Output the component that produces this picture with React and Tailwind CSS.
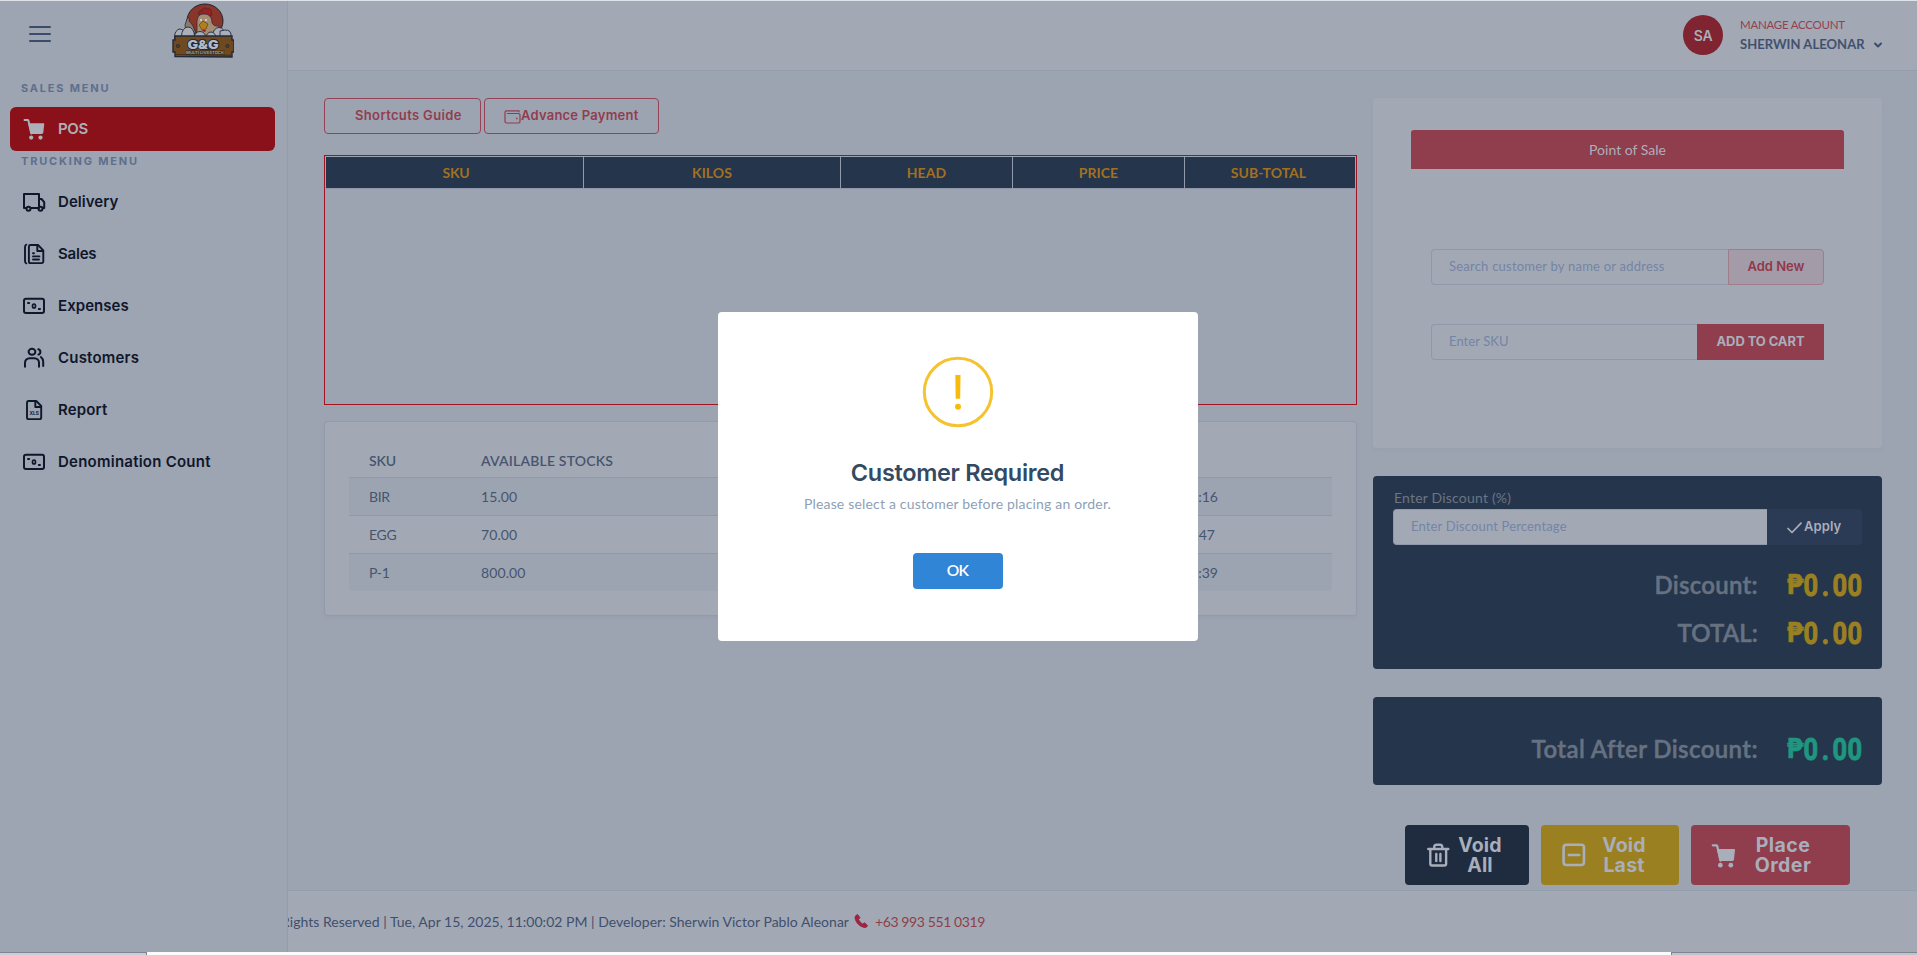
import React from "react";

const inter = "font-['Inter','Liberation_Sans',sans-serif]";
const lato = "font-['Lato','Liberation_Sans',sans-serif]";

function CartIcon({ className }) {
  return (
    <svg viewBox="0 0 24 24" className={className} fill="currentColor">
      <path d="M2.500 2.900h3.100c.4 0 .7.300.8.600l2.900 13" fill="none" stroke="currentColor" strokeWidth="2" strokeLinecap="round" strokeLinejoin="round" />
      <path d="M6.100 6.300h15.200c.6 0 1 .5.9 1.100l-.9 8.100c-.1.800-.7 1.400-1.500 1.400h-9.600c-.9 0-1.700-.6-1.900-1.400z" />
      <circle cx="9.200" cy="20.600" r="2.100" />
      <circle cx="18.500" cy="20.600" r="2.100" />
    </svg>
  );
}

function Line({ className, width = 2, children }) {
  return (
    <svg viewBox="0 0 24 24" className={className} fill="none" stroke="currentColor" strokeWidth={width} strokeLinecap="round" strokeLinejoin="round">
      {children}
    </svg>
  );
}

const TruckIcon = () => (
  <Line className="size-6 shrink-0">
    <path d="M4 18H2V4h15v14H9M17 9h2.500l2.700 3.200V18H21M13.500 18H17" />
    <circle cx="6.500" cy="18.700" r="2" />
    <circle cx="18.500" cy="18.700" r="2" />
  </Line>
);

const SalesIcon = () => (
  <Line className="size-6 shrink-0" width={1.9}>
    <path d="M4.300 2.600Q3 3 3 5v14q0 2 1.300 2.400" />
    <path d="M8.500 3H16l5.300 5.300v11.200a1.600 1.600 0 0 1-1.600 1.600H8.500a1.600 1.600 0 0 1-1.600-1.600v-15A1.600 1.600 0 0 1 8.500 3z" />
    <path d="M15.300 3.200V9h5.800M11 14.400h6.400M11 17.500h6M11 11.200h1" />
  </Line>
);

const CashIcon = () => (
  <Line className="size-6 shrink-0">
    <rect x="2" y="4.800" width="20" height="14.200" rx="2" />
    <ellipse cx="12" cy="12" rx="1.500" ry="2" strokeWidth="1.700" />
    <path d="M6 9h1.200M16.800 15H18" strokeWidth="1.900" />
  </Line>
);

const UsersIcon = () => (
  <Line className="size-6 shrink-0">
    <ellipse cx="10" cy="5.800" rx="3.400" ry="3" />
    <path d="M3 20.800v-4A4.600 4.600 0 0 1 7.600 12.200h4.800a4.600 4.600 0 0 1 4.600 4.600v4M16.300 3.200c2.800.8 2.800 4.600 0 5.400M18.900 11c1.500 1.200 2.300 2.800 2.300 4.800v4.200" />
  </Line>
);

const ReportIcon = () => (
  <Line className="size-6 shrink-0" width={1.9}>
    <path d="M6.600 3h7.700L19.200 8v11.500a1.600 1.600 0 0 1-1.600 1.600h-11A1.600 1.600 0 0 1 5 19.500v-15A1.600 1.600 0 0 1 6.600 3z" />
    <path d="M13.300 3.200V9h5.700" />
    <text x="12.100" y="16.700" textAnchor="middle" stroke="none" fill="currentColor" fontSize="4.800" fontWeight="700" fontFamily="Inter">XLS</text>
  </Line>
);

function Logo() {
  return (
    <svg viewBox="0 0 62 56" className="h-[56px] w-[62px]">
      <ellipse cx="33" cy="18" rx="18" ry="17" fill="#8a3529" stroke="#1f2430" strokeWidth="1" />
      <path d="M27 12c-1-3 1-5 3-4 0-3 3-4 5-2 3-1 5 1 4 4 1 1 1 2 0 3z" fill="#9d1f26" stroke="#1f2430" strokeWidth=".5" />
      <path d="M25 34V20c0-6 2-9 7-9s8 3 8 9c2 3 3 3 6 3l3 2-3 9z" fill="#a58d73" stroke="#242a35" strokeWidth=".7" />
      <path d="M14 30l-1-8 2-6c2-2 3-1 2 2l2 2 2 3 3 7z" fill="#8c7a68" stroke="#242a35" strokeWidth=".8" />
      <path d="M27 22l4-4 5 3-2 5-4 1z" fill="#b07f1d" stroke="#3b2c16" strokeWidth=".5" />
      <path d="M30 27q3 4 4 0z" fill="#9d1f26" />
      <circle cx="29" cy="17" r="1" fill="#dcdfe5" />
      <circle cx="34" cy="17" r="1" fill="#dcdfe5" />
      <g fill="#a8aeba" stroke="#222a38" strokeWidth=".9">
        <ellipse cx="8" cy="34" rx="5.500" ry="8" />
        <ellipse cx="16" cy="33" rx="6.500" ry="9" />
        <ellipse cx="47" cy="33" rx="6.500" ry="8.500" />
        <path d="M48 28q10-3 11 3v8H48z" />
        <ellipse cx="28" cy="35" rx="6" ry="6.500" />
        <ellipse cx="39" cy="35" rx="5" ry="6" />
      </g>
      <path d="M3 33h57v4h2v12h-2v5L3 53.500V49H1V37h2z" fill="#6f4a20" stroke="#222a38" strokeWidth="1.400" />
      <path d="M3 51.500l57 .8" stroke="#4d3315" strokeWidth="1.200" />
      <circle cx="6" cy="43" r="1.600" fill="#59401f" stroke="#222a38" strokeWidth=".8" />
      <circle cx="55.500" cy="43" r="1.600" fill="#59401f" stroke="#222a38" strokeWidth=".8" />
      <text x="31" y="46" textAnchor="middle" textLength="31" lengthAdjust="spacingAndGlyphs" fontFamily="Inter" fontWeight="900" fontSize="12" fill="#b4bac5" stroke="#222a38" strokeWidth="1.800" paintOrder="stroke">G&amp;G</text>
      <text x="33" y="50.800" textAnchor="middle" textLength="38" lengthAdjust="spacingAndGlyphs" fontFamily="Inter" fontWeight="700" fontSize="3.200" fill="#a0a3a8" stroke="#2a2620" strokeWidth=".8" paintOrder="stroke">MULTI LIVESTOCK</text>
    </svg>
  );
}

const menu = [
  ["Delivery", TruckIcon, "tracking-[0.05px]"],
  ["Sales", SalesIcon, "tracking-[-0.2px]"],
  ["Expenses", CashIcon, "tracking-[0.05px]"],
  ["Customers", UsersIcon, "tracking-[0.2px]"],
  ["Report", ReportIcon, "tracking-[0.15px]"],
  ["Denomination Count", CashIcon, "tracking-[0.24px]"],
];

function Sidebar() {
  return (
    <aside className="w-[288px] shrink-0 border-r border-[#929daf] bg-[#9da4b2] pl-[10px]">
      <div className="flex h-[70px] items-start">
        <div className="mt-[25px] ml-[19px] flex w-[22px] flex-col gap-[5px]">
          <i className="h-[2px] rounded bg-[#3b4c6b]" />
          <i className="h-[2px] rounded bg-[#3b4c6b]" />
          <i className="h-[2px] rounded bg-[#3b4c6b]" />
        </div>
        <div className="mt-[2px] ml-[121px]"><Logo /></div>
      </div>
      <div className={`${inter} mt-[8px] h-[28px] pl-[11px] text-[11px] leading-[19px] font-bold tracking-[1.800px] text-[#5f6f8c]`}>SALES MENU</div>
      <div className="flex h-[44px] w-[265px] items-center rounded-md bg-[#8a101a] pl-[12px] text-[#abb0bb]">
        <CartIcon className="size-6" />
        <span className={`${inter} ml-[12px] text-[15px] font-semibold tracking-[-0.4px]`}>POS</span>
      </div>
      <div className={`${inter} h-[29px] pt-px pl-[11px] text-[11px] leading-[19px] font-bold tracking-[1.800px] text-[#5f6f8c]`}>TRUCKING MENU</div>
      <nav className="flex flex-col gap-2 text-[#0f172b]">
        {menu.map(([label, Icon, track]) => (
          <div key={label} className="flex h-[44px] items-center pl-[12px]">
            <Icon />
            <span className={`${inter} ml-[12px] text-[15px] font-semibold ${track}`}>{label}</span>
          </div>
        ))}
      </nav>
    </aside>
  );
}

function Header() {
  return (
    <header className="flex h-[70px] shrink-0 justify-end border-b border-[#949dad] bg-[#a3a9b4] pr-[34px]">
      <div className={`${inter} mt-[14px] flex size-10 items-center justify-center rounded-full bg-[#7f2430] text-[14px] font-semibold tracking-[-0.2px] text-[#a9aeba]`}>SA</div>
      <div className={`${lato} ml-[17px] w-[124px] pt-[16px] whitespace-nowrap`}>
        <div className="text-[11.5px] leading-4 tracking-[-0.25px] text-[#943f52]">MANAGE ACCOUNT</div>
        <div className="mt-[3px] text-[13px] leading-4 font-semibold tracking-[0.08px] text-[#3f4f6e] [-webkit-text-stroke:0.200px]">SHERWIN ALEONAR</div>
      </div>
      <svg viewBox="0 0 10 7" className="mt-[41px] ml-[9px] h-[7px] w-[10px]" fill="none" stroke="#3b4c6b" strokeWidth="2" strokeLinecap="round" strokeLinejoin="round"><path d="M2 1.500l3 3 3-3" /></svg>
    </header>
  );
}

const columns = [["SKU", "tracking-[-0.2px] pl-[3px]"], ["KILOS", "tracking-[0.07px]"], ["HEAD", "tracking-[0.07px]"], ["PRICE", "tracking-[0.07px]"], ["SUB-TOTAL", "tracking-[0.02px] pr-[3px]"]];
const stocks = [["BIR", "15.00", "15:16"], ["EGG", "70.00", "09:47"], ["P-1", "800.00", "10:39"]];

function LeftColumn() {
  return (
    <section className="flex w-[1033px] flex-col">
      <div className={`${inter} flex h-[36px] gap-[3px] text-[13px] font-semibold text-[#913d50]`}>
        <div className="flex w-[157px] items-center rounded-[4px] border border-[#964357] pl-[30px] tracking-[0.350px]">Shortcuts Guide</div>
        <div className="flex w-[175px] items-center rounded-[4px] border border-[#964357] pl-[19px] whitespace-nowrap">
          <svg viewBox="0 0 17 14" className="mt-px h-[14px] w-[17px] shrink-0" fill="none" stroke="currentColor" strokeWidth="1.200"><path d="M1 2.200v9.300q0 1.500 1.500 1.500h12q1.500 0 1.500-1.500V5q0-1.500-1.500-1.500H3M1 2.200Q1 .8 2.500.8H15v1.500" /><path d="M12 8.500h1.500" strokeWidth="1.500" /></svg>
          <span className="tracking-[0.230px]">Advance Payment</span>
        </div>
      </div>
      <div className="mt-[21px] h-[250px] border border-[#a01521] p-px">
        <div className={`${lato} grid h-[32px] grid-cols-[257px_256px_171px_171px_170px] gap-px border-b border-[#8d97a9] bg-[#929bad] text-[14px] font-bold text-[#a3701f]`}>
          {columns.map(([c, track]) => (
            <div key={c} className={`flex items-center justify-center bg-[#25354b] pb-px ${track}`}>{c}</div>
          ))}
        </div>
      </div>
      <div className={`${lato} mt-[16px] h-[195px] rounded-[4px] border border-[#919bac] bg-[#a3a9b4] px-[24px] pt-[22px] text-[14px] text-[#46556f] shadow-[0_2px_4px_rgba(60,75,100,0.06)]`}>
        <div className="grid h-[34px] grid-cols-[112px_715px_156px] items-center border-b border-[#8f99ab] font-semibold">
          <span className="pl-[20px] tracking-[-0.2px]">SKU</span>
          <span className="pl-[20px] tracking-[0.180px]">AVAILABLE STOCKS</span>
        </div>
        {stocks.map(([sku, qty, time], i) => (
          <div key={sku} className={`grid grid-cols-[112px_715px_156px] items-center pb-px ${i < 2 ? "h-[38px] border-b border-[#8f99ab]" : "h-[37px] rounded-b-[4px]"} ${i === 1 ? "" : "bg-[#9da4b1]"}`}>
            <span className="pl-[20px] tracking-[-0.300px]">{sku}</span>
            <span className="pl-[20px] tracking-[0.100px]">{qty}</span>
            <span className={i === 1 ? "pl-[3px]" : "pl-[6px]"}>{time}</span>
          </div>
        ))}
      </div>
    </section>
  );
}

function Lcd({ className }) {
  return (
    <div className={`flex h-[24px] w-[76px] items-center leading-none font-bold ${className}`}>
      <span className="inline-flex w-[18px] shrink-0 justify-center font-['DejaVu_Sans',sans-serif] text-[26px]"><span className="scale-x-[0.950] [-webkit-text-stroke:0.400px]">₱</span></span>
      {["0", ".", "0", "0"].map((d, i) => (
        <span key={i} className="inline-flex w-[14.500px] shrink-0 justify-center font-['Liberation_Mono',monospace] text-[31px]">
          <span className="font-['Roboto','Liberation_Sans',sans-serif] scale-x-[0.820] [-webkit-text-stroke:1px]">{d}</span>
        </span>
      ))}
    </div>
  );
}

function RightColumn() {
  return (
    <section className="flex w-[509px] flex-col">
      <div className={`${lato} h-[350px] rounded-[4px] bg-[#a3a9b4] pt-[32px] shadow-[0_2px_4px_rgba(60,75,100,0.05)]`}>
        <div className="ml-[38px] flex h-[39px] w-[433px] items-center justify-center rounded-t-[3px] bg-[#903d4e] pb-px text-[14px] text-[#abb0bb]">Point of Sale</div>
        <div className="mt-[80px] ml-[58px] flex h-[36px] w-[393px]">
          <div className="flex flex-1 items-center rounded-l-[4px] border border-r-0 border-[#8f99ab] pl-[17px] text-[13px] tracking-[0.220px] text-[#7384a6]">Search customer by name or address</div>
          <div className={`${inter} flex w-[96px] items-center justify-center rounded-r-[4px] border border-[#a07c8b] bg-[#a39ca8] text-[13px] font-semibold text-[#90384c]`}>Add New</div>
        </div>
        <div className="mt-[39px] ml-[58px] flex h-[36px] w-[393px]">
          <div className="flex flex-1 items-center rounded-l-[4px] border border-r-0 border-[#8f99ab] pl-[17px] text-[13px] tracking-[0.060px] text-[#7384a6]">Enter SKU</div>
          <div className={`${inter} flex w-[127px] items-center justify-center bg-[#903d4e] text-[13px] font-bold tracking-[-0.100px] text-[#a9aebb]`}>ADD TO CART</div>
        </div>
      </div>

      <div className={`${lato} mt-[28px] h-[193px] rounded-[4px] bg-[#25354b] px-[20px] pt-[12px]`}>
        <div className="h-[21px] pl-px text-[14px] leading-[20px] tracking-[0.200px] text-[#6a7585]">Enter Discount (%)</div>
        <div className="flex h-[36px]">
          <div className="flex w-[374px] items-center rounded-l-[4px] border border-r-0 border-[#8f99ab] bg-[#a3a9b4] pl-[17px] text-[13px] tracking-[0.160px] text-[#7384a6]">Enter Discount Percentage</div>
          <div className={`${inter} flex flex-1 items-center rounded-r-[4px] bg-[#2b3b56] pl-[20px] text-[13px] font-semibold text-[#a9aebb]`}>
            <svg viewBox="0 0 15 12" className="mt-[2px] h-[12px] w-[15px]" fill="none" stroke="currentColor" strokeWidth="1.700" strokeLinecap="round" strokeLinejoin="round"><path d="M1 6.500L5 10.500L14 1.200" /></svg>
            <span className="ml-[2px] tracking-[0.100px]">Apply</span>
          </div>
        </div>
        <div className="mt-[16px] flex h-[48px] items-center justify-end text-[24px] font-semibold text-[#667181]">
          <span className="tracking-[0.280px] [-webkit-text-stroke:0.500px]">Discount:</span>
          <Lcd className="ml-[28px] text-[#9b8022]" />
        </div>
        <div className="flex h-[48px] items-center justify-end text-[24px] font-semibold text-[#667181]">
          <span className="tracking-[0.120px] [-webkit-text-stroke:0.500px]">TOTAL:</span>
          <Lcd className="ml-[28px] text-[#9b8022]" />
        </div>
      </div>

      <div className={`${lato} mt-[28px] flex h-[88px] items-center justify-end rounded-[4px] bg-[#25354b] px-[20px] pt-[16px] text-[24px] font-semibold text-[#667181]`}>
        <span className="tracking-[0.400px] [-webkit-text-stroke:0.500px]">Total After Discount:</span>
        <Lcd className="ml-[28px] text-[#1f967f]" />
      </div>

      <div className={`${inter} mt-[40px] ml-[32px] flex h-[60px] gap-[12px] text-center text-[19.500px] leading-[20px] font-bold text-[#a9aebb]`}>
        <div className="flex w-[124px] items-center rounded-[4px] bg-[#1f2c40] pl-[20px]">
          <Line className="size-[26px] shrink-0" width={2.2}>
            <path d="M3 6.500h18.500M8.500 6.200V4.800A2.300 2.300 0 0 1 10.800 2.500h3A2.300 2.300 0 0 1 16 4.800v1.400M4.900 6.800V20a1.700 1.700 0 0 0 1.700 1.700h11.200a1.700 1.700 0 0 0 1.700-1.700V6.800M10.400 11v6.500M14.200 11v6.500" />
          </Line>
          <span className="ml-[6px] w-[46px] tracking-[0.200px]">Void All</span>
        </div>
        <div className="flex w-[138px] items-center rounded-[4px] bg-[#9b8022] pl-[20px]">
          <Line className="size-[26px] shrink-0" width={2.4}>
            <rect x="2.400" y="2.600" width="18.800" height="18.600" rx="2.500" />
            <path d="M7.300 12h9.500" />
          </Line>
          <span className="ml-[14px] w-[46px] tracking-[0.200px]">Void Last</span>
        </div>
        <div className="flex w-[159px] items-center rounded-[4px] bg-[#903d4e] pl-[19px]">
          <CartIcon className="size-[27px] shrink-0" />
          <span className="ml-[15px] w-[62px] tracking-[0.450px]">Place Order</span>
        </div>
      </div>
    </section>
  );
}

function Footer() {
  return (
    <footer className={`${lato} flex h-[62px] shrink-0 items-center border-t border-[#929dad] bg-[#a3a9b4] pb-px text-[14px] text-[#3f4f6e]`}>
      <div className="flex w-[561px] justify-end overflow-hidden whitespace-nowrap">
        <span className="tracking-[0.020px]">Rights Reserved | Tue, Apr 15, 2025, 11:00:02 PM | Developer: Sherwin Victor Pablo Aleonar</span>
      </div>
      <svg viewBox="0 0 16 16" className="ml-[4px] size-[16px]"><path d="M4.500 1.500Q2 2.500 2 4.500C2.500 9.500 7 14 12 14.500q2 0 2.500-2L11.500 9.800l-2 1.200Q6.500 9 5.500 6.500L7 4.600z" fill="#a32340" stroke="#8b1f3c" strokeWidth=".8" strokeLinejoin="round" /></svg>
      <span className="ml-[6px] tracking-[-0.400px] text-[#8d3f48]">+63 993 551 0319</span>
    </footer>
  );
}

function Dialog() {
  return (
    <div className="absolute inset-0 flex items-center justify-center pr-[2px] pb-[2px]">
      <div className="flex h-[329px] w-[480px] flex-col items-center rounded-[4px] bg-white pt-[44px]">
        <svg viewBox="0 0 72 72" className="size-[72px]">
          <circle cx="36" cy="36" r="33.700" fill="none" stroke="#f6c330" strokeWidth="3" />
          <path d="M33.300 19h5.200l-.3 23.700h-4.500z" fill="#f8bb0a" />
          <circle cx="36" cy="50.800" r="3" fill="#f8bb0a" />
        </svg>
        <h2 className={`${inter} mt-[27px] text-[23.500px] leading-9 font-semibold tracking-[-0.320px] text-[#344a63]`}>Customer Required</h2>
        <p className={`${lato} mt-[3px] text-[14px] leading-5 tracking-[0.180px] text-[#8d9fb8]`}>Please select a customer before placing an order.</p>
        <div className={`${lato} mt-[39px] flex h-[36px] w-[90px] items-center justify-center rounded-[4px] bg-[#3085d6] pb-px text-[15.500px] font-semibold tracking-[-0.700px] text-white`}>OK</div>
      </div>
    </div>
  );
}

export default function App() {
  return (
    <div className="relative flex h-[955px] w-[1917px] flex-col overflow-hidden bg-[#9da4b1]">
      <div className="h-px shrink-0 bg-[#dfe2e8]" />
      <div className="flex h-[951px] shrink-0">
        <Sidebar />
        <div className="flex flex-1 flex-col">
          <Header />
          <main className="flex h-[819px] shrink-0 gap-[16px] pt-[27px] pl-[36px]">
            <LeftColumn />
            <RightColumn />
          </main>
          <Footer />
        </div>
      </div>
      <div className="flex h-[3px] shrink-0">
        <div className="w-[147px] border-t border-r border-[#7f848f] bg-[#c9cddb]" />
        <div className="w-[1524px] bg-[#fbfbfc]" />
        <div className="flex-1 border-t border-l border-[#7f848f] bg-[#bfc3cf]" />
      </div>
      <Dialog />
    </div>
  );
}
